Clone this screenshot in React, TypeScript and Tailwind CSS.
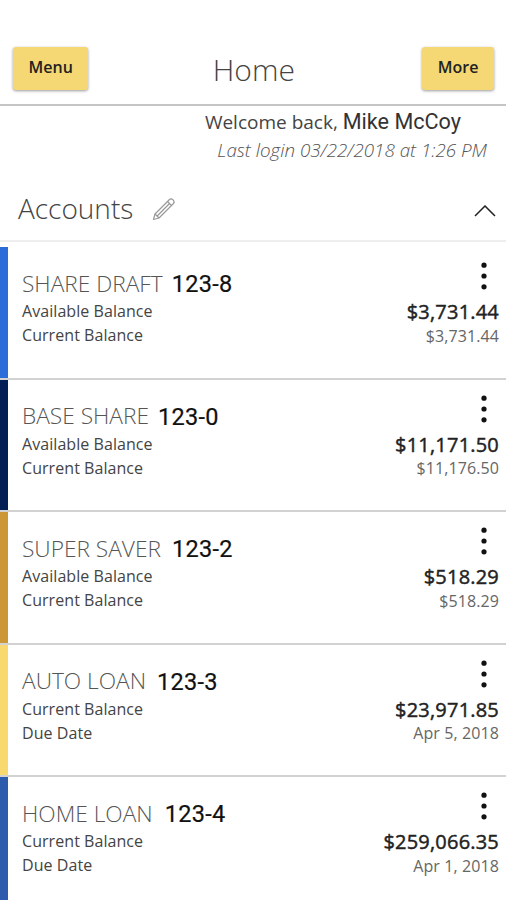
interface Account {
  name: string;
  number: string;
  labels: [string, string];
  amount: string;
  detail: string;
  stripe: string;
  gap: string;
}

const accounts: Account[] = [
  {
    name: "SHARE DRAFT",
    number: "123-8",
    labels: ["Available Balance", "Current Balance"],
    amount: "$3,731.44",
    detail: "$3,731.44",
    stripe: "bg-[#2a6dd8]",
    gap: "gap-[9px]",
  },
  {
    name: "BASE SHARE",
    number: "123-0",
    labels: ["Available Balance", "Current Balance"],
    amount: "$11,171.50",
    detail: "$11,176.50",
    stripe: "bg-[#031f56]",
    gap: "gap-[9px]",
  },
  {
    name: "SUPER SAVER",
    number: "123-2",
    labels: ["Available Balance", "Current Balance"],
    amount: "$518.29",
    detail: "$518.29",
    stripe: "bg-[#cc9736]",
    gap: "gap-[11px]",
  },
  {
    name: "AUTO LOAN",
    number: "123-3",
    labels: ["Current Balance", "Due Date"],
    amount: "$23,971.85",
    detail: "Apr 5, 2018",
    stripe: "bg-[#f7d970]",
    gap: "gap-[11px]",
  },
  {
    name: "HOME LOAN",
    number: "123-4",
    labels: ["Current Balance", "Due Date"],
    amount: "$259,066.35",
    detail: "Apr 1, 2018",
    stripe: "bg-[#2c5cab]",
    gap: "gap-[12px]",
  },
];

function HeaderButton({ label }: { label: string }) {
  return (
    <button className="flex h-[43px] items-center justify-center rounded-[3px] bg-[#f5d873] px-[15.5px] pb-[3px] text-[16px] font-semibold text-[#222] shadow-[0_1px_3px_rgba(0,0,0,0.4)]">
      {label}
    </button>
  );
}

function AccountRow({ account }: { account: Account }) {
  return (
    <li className="flex h-[132.5px] border-b-2 border-[#d2d2d2]">
      <div className={`w-2 shrink-0 ${account.stripe}`} />
      <div className="flex-1 pt-[21px] pl-[14px]">
        <div className={`flex h-8 items-center whitespace-nowrap ${account.gap}`}>
          <span className="text-[22.7px] font-light text-[#555]">{account.name}</span>
          <span className="pt-[2px] font-['Roboto'] text-[23.5px] tracking-[0.3px] text-[#111] [-webkit-text-stroke:0.2px]">
            {account.number}
          </span>
        </div>
        <div className="-mt-px text-[16px] leading-[24.4px] tracking-[0.06px] text-[#444]">
          <p>{account.labels[0]}</p>
          <p>{account.labels[1]}</p>
        </div>
      </div>
      <div className="flex flex-col items-end pt-[15px] pr-[7px]">
        <svg className="mr-[9px] h-7 w-3" viewBox="0 0 12 28" fill="#111">
          <circle cx="6" cy="3.2" r="2.6" />
          <circle cx="6" cy="14" r="2.6" />
          <circle cx="6" cy="24.8" r="2.6" />
        </svg>
        <p className="mt-[10px] text-[20px] leading-6 tracking-[0.2px] text-[#222] [-webkit-text-stroke:0.45px]">
          {account.amount}
        </p>
        <p className="-mt-[0.5px] text-[16px] leading-6 tracking-[0.1px] text-[#666]">{account.detail}</p>
      </div>
    </li>
  );
}

export default function App() {
  return (
    <div className="h-[900px] overflow-hidden bg-white font-['Open_Sans',sans-serif]">
      <header className="flex h-[106px] items-start justify-between border-b-2 border-[#c4c4c4] pt-[47px] pr-3 pl-[13px]">
        <HeaderButton label="Menu" />
        <h1 className="pr-[3px] text-[30px] leading-[46px] font-light text-[#444]">Home</h1>
        <HeaderButton label="More" />
      </header>
      <section className="h-[71px] pt-[2px] pr-[19px] text-right whitespace-nowrap">
        <p className="pr-[26px] text-[19px] leading-7 text-[#444]">
          Welcome back, <span className="font-['Roboto'] text-[21.6px] text-[#333]">Mike McCoy</span>
        </p>
        <p className="text-[18.8px] leading-7 font-light text-[#555] italic">Last login 03/22/2018 at 1:26 PM</p>
      </section>
      <div className="flex h-[65px] items-center border-b-2 border-[#eee] pr-[10px] pl-[18px]">
        <h2 className="pb-[2px] text-[28px] font-light text-[#444]">Accounts</h2>
        <svg
          className="ml-[19px] h-6 w-6"
          viewBox="0 0 24 24"
          fill="none"
          stroke="#999"
          strokeWidth="1.2"
          strokeLinejoin="round"
        >
          <path d="M1.5 22.5 3 17 17.5 2.5Q19 1 21 2.8Q23 4.8 21.5 6.5L7 21Z" />
          <path d="M3 17 7 21M15.5 4.5l4 4M5.2 19 17.5 6.5" />
        </svg>
        <svg className="mt-[4px] ml-auto h-3 w-[22px]" viewBox="0 0 22 12" fill="none" stroke="#222" strokeWidth="1.5">
          <path d="M1 11 11 1l10 10" />
        </svg>
      </div>
      <ul className="pt-[5px]">
        {accounts.map((account) => (
          <AccountRow key={account.number} account={account} />
        ))}
      </ul>
    </div>
  );
}
